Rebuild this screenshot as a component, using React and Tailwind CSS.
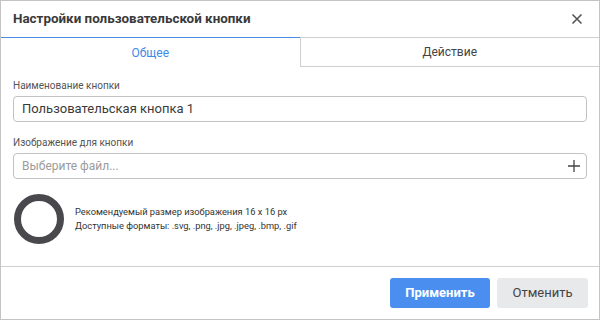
export default function App() {
  return (
    <div
      className="w-[600px] h-[320px] bg-white border border-[#c4c4c4] flex flex-col text-[#333]"
      style={{ fontFamily: "Roboto, 'Liberation Sans', sans-serif" }}
    >
      {/* header */}
      <div className="h-[36px] flex items-center justify-between pl-[12px] pr-[14px]">
        <h2 className="text-[13.4px] font-bold text-[#3a3a3a]">Настройки пользовательской кнопки</h2>
        <button className="w-[16px] h-[16px] flex items-center justify-center text-[#555]">
          <svg width="12" height="12" viewBox="0 0 12 12">
            <path d="M1.5 1.5 L10.5 10.5 M10.5 1.5 L1.5 10.5" stroke="#555" strokeWidth="1.6" />
          </svg>
        </button>
      </div>

      {/* tabs */}
      <div className="flex h-[30px]">
        <div className="flex-1 border-t border-[#4a8fe7] flex items-center justify-center text-[12px] text-[#3d8ae8]">
          Общее
        </div>
        <div className="flex-1 border-t border-b border-l border-[#cfcfcf] flex items-center justify-center text-[12px] text-[#444]">
          Действие
        </div>
      </div>

      {/* body */}
      <div className="flex-1 flex flex-col px-[12px] pt-[13px]">
        <label className="text-[10px] text-[#555] leading-[12px]">Наименование кнопки</label>
        <div className="mt-[4px] h-[26px] border border-[#c2c2c2] rounded-[4px] flex items-center px-[8px] text-[13px] text-[#3a3a3a]">
          Пользовательская кнопка 1
        </div>

        <label className="mt-[15px] text-[10px] text-[#555] leading-[12px]">Изображение для кнопки</label>
        <div className="mt-[4px] h-[26px] border border-[#c2c2c2] rounded-[4px] flex items-center justify-between pl-[8px] pr-[6px] text-[12px] text-[#9b9b9b]">
          <span>Выберите файл...</span>
          <svg width="12" height="12" viewBox="0 0 12 12">
            <path d="M6 0 V12 M0 6 H12" stroke="#444" strokeWidth="1.3" />
          </svg>
        </div>

        <div className="mt-[15px] flex items-center gap-[11px]">
          <div className="w-[50px] h-[50px] rounded-full border-[7px] border-[#48484d] ml-[1px]" />
          <div className="text-[9.3px] leading-[14px] text-[#333]">
            <div>Рекомендуемый размер изображения 16 x 16 px</div>
            <div>Доступные форматы: .svg, .png, .jpg, .jpeg, .bmp, .gif</div>
          </div>
        </div>
      </div>

      {/* footer */}
      <div className="h-[53px] border-t border-[#cfcfcf] flex items-center justify-end gap-[7px] pr-[11px] pb-[1px]">
        <button className="w-[100px] h-[30px] rounded-[3px] bg-[#4a8ff0] text-white text-[13px] font-bold">
          Применить
        </button>
        <button className="w-[91px] h-[30px] rounded-[3px] bg-[#e8e9eb] text-[#444] text-[13px]">
          Отменить
        </button>
      </div>
    </div>
  );
}
